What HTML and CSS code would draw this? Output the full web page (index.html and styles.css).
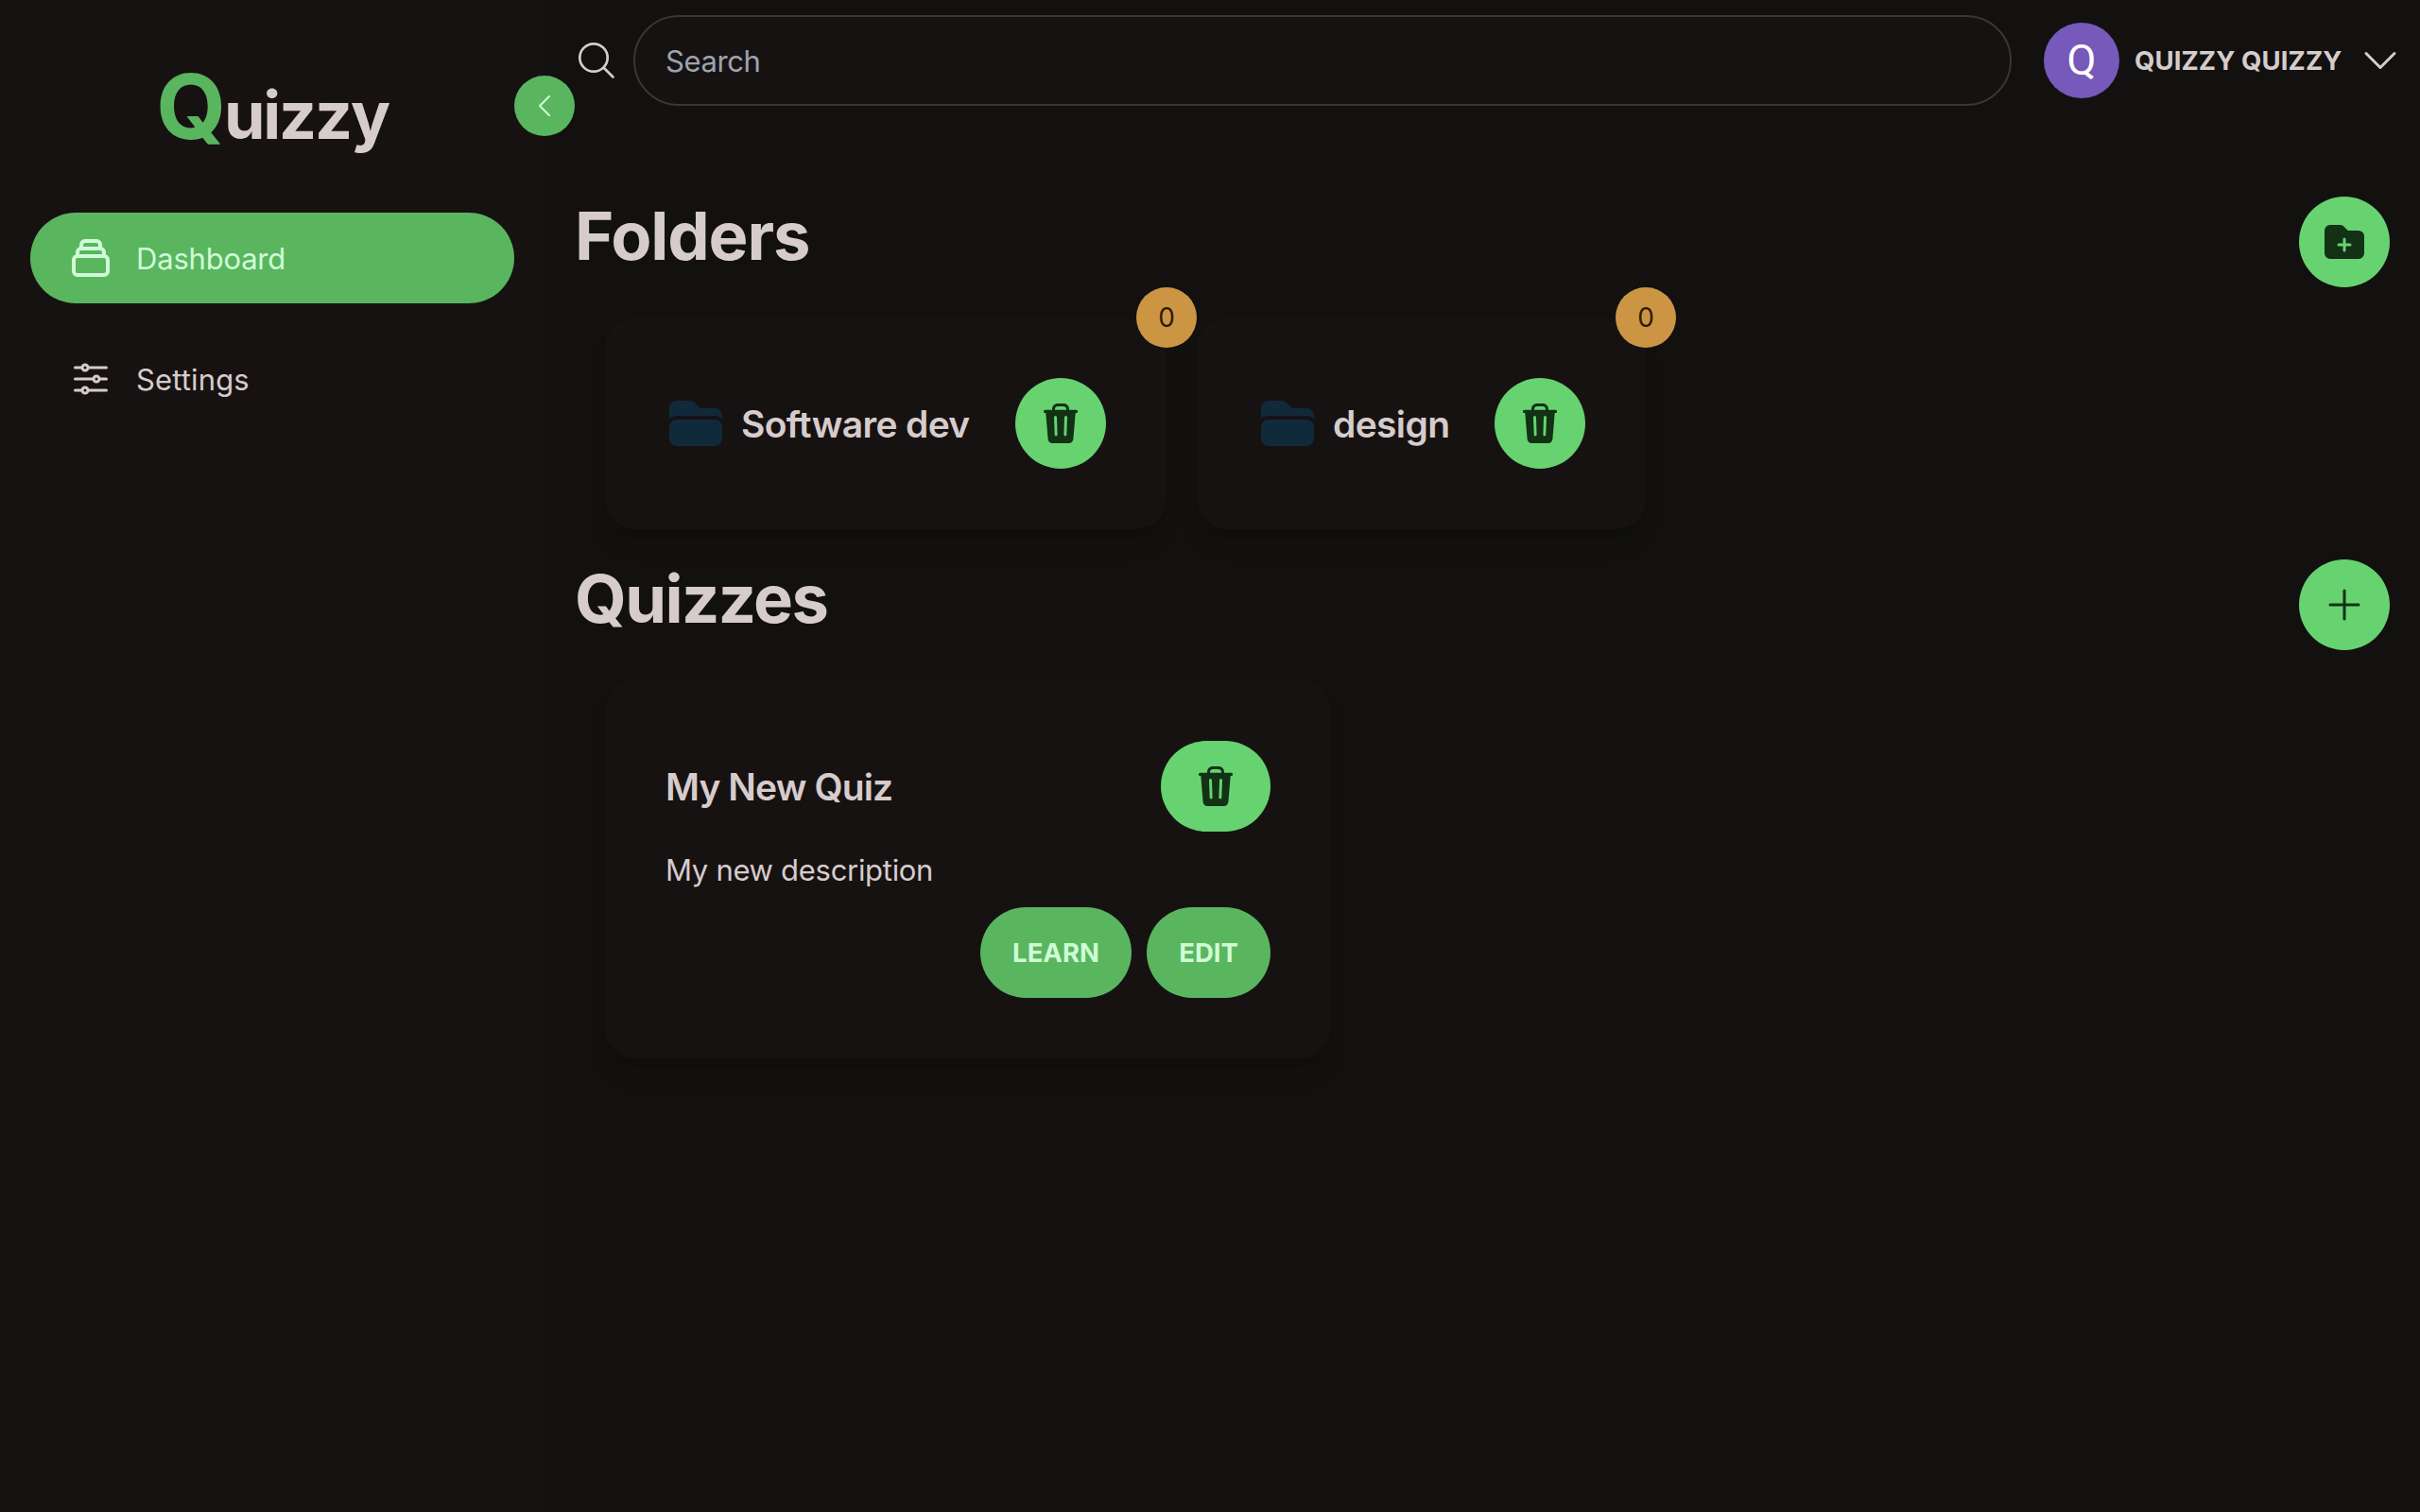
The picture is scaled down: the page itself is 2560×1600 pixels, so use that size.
FILE: index.html
```
<!DOCTYPE html>
<html lang="en">
<head>
<meta charset="utf-8">
<title>Quizzy</title>
<link rel="stylesheet" href="styles.css">
</head>
<body>
<svg class="sprite" aria-hidden="true">
  <symbol id="trash" viewBox="0 0 48 48"><path fill-rule="evenodd" d="M15 9.800V9C15 5.500 17.500 3 21 3H27C30.500 3 33 5.500 33 9V9.800H40.500A1.600 1.600 0 0 1 40.500 13H39.700L37.400 40.500C37.200 43.200 35.300 45 32.500 45H15.500C12.700 45 10.800 43.200 10.600 40.500L8.300 13H7.500A1.600 1.600 0 0 1 7.500 9.800ZM18 9.800H30V9C30 7 28.800 6 27 6H21C19.200 6 18 7 18 9ZM17 17.600L17.700 36A1.450 1.450 0 0 0 20.600 36L20 17.600A1.500 1.500 0 0 0 17 17.600ZM28 17.600L27.400 36A1.450 1.450 0 0 0 30.300 36L31 17.600A1.500 1.500 0 0 0 28 17.600Z"/></symbol>
  <symbol id="folder" viewBox="0 0 24 24"><path d="M19.500 21a3 3 0 0 0 3-3v-4.500a3 3 0 0 0-3-3h-15a3 3 0 0 0-3 3V18a3 3 0 0 0 3 3h15ZM1.500 10.146V6a3 3 0 0 1 3-3h5.379a2.250 2.250 0 0 1 1.590.659l2.122 2.121c.14.141.331.22.53.22H19.500a3 3 0 0 1 3 3v1.146A4.483 4.483 0 0 0 19.500 9h-15a4.483 4.483 0 0 0-3 1.146Z"/></symbol>
</svg>
<div class="app">
  <aside class="sidebar">
    <div class="logo"><span class="logo-q">Q</span><span class="logo-rest">uizzy</span></div>
    <button class="toggle" aria-label="Collapse"><svg viewBox="0 0 24 24" class="line"><path d="M15.750 19.500 8.250 12l7.500-7.500"/></svg></button>
    <nav class="nav">
      <a class="nav-item active"><svg viewBox="0 0 24 24" class="line"><path d="M19 11H5m14 0a2 2 0 0 1 2 2v6a2 2 0 0 1-2 2H5a2 2 0 0 1-2-2v-6a2 2 0 0 1 2-2m14 0V9a2 2 0 0 0-2-2M5 11V9a2 2 0 0 1 2-2m0 0V5a2 2 0 0 1 2-2h6a2 2 0 0 1 2 2v2M7 7h10"/></svg><span class="label t-dash">Dashboard</span></a>
      <a class="nav-item"><svg viewBox="0 0 24 24" class="line"><path d="M10.500 6h9.750M10.500 6a1.500 1.500 0 1 1-3 0m3 0a1.500 1.500 0 1 0-3 0M3.750 6H7.500m3 12h9.750m-9.750 0a1.500 1.500 0 0 1-3 0m3 0a1.500 1.500 0 0 0-3 0m-3.750 0H7.500m9-6h3.750m-3.750 0a1.500 1.500 0 0 1-3 0m3 0a1.500 1.500 0 0 0-3 0m-9.750 0h9.750"/></svg><span class="label t-set">Settings</span></a>
    </nav>
  </aside>
  <main class="main">
    <header class="topbar">
      <svg viewBox="0 0 48 48" class="line search-icon"><circle cx="20" cy="21" r="14.700"/><path d="M30.700 31.700 40.500 41.500"/></svg>
      <div class="search"><span class="label t-search">Search</span></div>
      <div class="user"><div class="avatar"><span>Q</span></div><span class="user-name">QUIZZY QUIZZY</span><svg viewBox="0 0 24 24" class="line chevron"><path d="m19.500 8.250-7.500 7.500-7.500-7.500"/></svg></div>
    </header>
    <section class="section">
      <div class="section-head"><h1 class="t-folders">Folders</h1>
        <button class="btn round" aria-label="Add folder"><svg viewBox="0 0 24 24"><path fill-rule="evenodd" d="M19.500 21a3 3 0 0 0 3-3V9a3 3 0 0 0-3-3h-5.379a.750.750 0 0 1-.530-.220L11.470 3.660A2.250 2.250 0 0 0 9.879 3H4.500a3 3 0 0 0-3 3v12a3 3 0 0 0 3 3h15Zm-6.750-10.500a.750.750 0 0 0-1.500 0v2.250H9a.750.750 0 0 0 0 1.500h2.250v2.250a.750.750 0 0 0 1.500 0v-2.250H15a.750.750 0 0 0 0-1.500h-2.250V10.500Z"/></svg></button></div>
      <div class="cards">
        <article class="card folder-card first"><span class="badge">0</span><svg class="folder-icon"><use href="#folder"/></svg><h2>Software dev</h2><button class="btn round" aria-label="Delete"><svg><use href="#trash"/></svg></button></article>
        <article class="card folder-card second"><span class="badge">0</span><svg class="folder-icon"><use href="#folder"/></svg><h2>design</h2><button class="btn round" aria-label="Delete"><svg><use href="#trash"/></svg></button></article>
      </div>
    </section>
    <section class="section">
      <div class="section-head"><h1 class="t-quizzes">Quizzes</h1>
        <button class="btn round" aria-label="Add quiz"><svg viewBox="0 0 24 24" class="line"><path d="M12 4.500v15m7.500-7.500h-15"/></svg></button></div>
      <div class="cards">
        <article class="card quiz-card">
          <div class="quiz-head"><h2 class="t-my">My New Quiz</h2><button class="btn wide" aria-label="Delete"><svg><use href="#trash"/></svg></button></div>
          <p>My new description</p>
          <div class="actions"><button class="btn primary learn">LEARN</button><button class="btn primary edit">EDIT</button></div>
        </article>
      </div>
    </section>
  </main>
</div>
</body>
</html>
```
FILE: styles.css
```
* { box-sizing: border-box; }
body { margin: 0; background: #12110f; color: #d6cccc; font: 400 31px/48px Inter, "Liberation Sans", sans-serif; }
h1, h2, p { margin: 0; }
button { font: inherit; border: 0; padding: 0; }
svg { display: block; width: 48px; height: 48px; flex: none; fill: currentColor; }
.sprite { position: absolute; width: 0; height: 0; }
.line { fill: none; stroke: currentColor; stroke-width: 1.5; stroke-linecap: round; stroke-linejoin: round; }
.label { padding-top: 2px; }
.app { display: flex; width: 2560px; height: 1600px; overflow: hidden; }

.sidebar { position: relative; width: 576px; flex: none; background: #171212; padding: 65px 32px 0; }
.logo { display: flex; justify-content: center; align-items: baseline; height: 96px; line-height: 96px; font-weight: 700; }
.logo-q { font-size: 95px; color: #5ab55f; letter-spacing: -2px; }
.logo-rest { font-size: 70px; letter-spacing: -2.2px; }
.toggle { position: absolute; left: 544px; top: 80px; z-index: 1; width: 64px; height: 64px; border-radius: 50%; background: #5ab55f; color: #cffcd6; display: grid; place-items: center; }
.toggle svg { width: 32px; height: 32px; }
.nav { display: grid; gap: 32px; margin-top: 64px; }
.nav-item { display: flex; align-items: center; gap: 24px; height: 96px; padding: 0 40px; border-radius: 48px; }
.active { background: #5ab55f; color: #cffcd6; }
.active svg { stroke-width: 2; }
.t-dash { letter-spacing: -.2px; }
.t-set { letter-spacing: .15px; }

.main { flex: 1; min-width: 0; }
.topbar { display: flex; align-items: center; height: 128px; padding: 0 16px 0 32px; }
.search-icon { stroke-width: 2.7; }
.search { width: 1458px; height: 96px; margin-left: 14px; border: 2px solid #3a3635; border-radius: 48px; background: #171212; color: #9ca3af; padding: 0 32px; display: flex; align-items: center; }
.t-search { letter-spacing: -.4px; }
.user { display: flex; align-items: center; margin-left: 34px; }
.avatar { width: 80px; height: 80px; border-radius: 50%; background: #7759bb; color: #fff; display: grid; place-items: center; font: 400 45px/1 Roboto, sans-serif; }
.avatar span { padding-bottom: 2px; }
.user-name { width: 220px; margin: 0 16px; font-size: 27.5px; font-weight: 650; letter-spacing: .1px; white-space: nowrap; }

.section { padding: 0 32px; }
.section-head { display: flex; justify-content: space-between; height: 128px; }
.section:nth-of-type(1) .section-head { margin-top: 80px; }
.section:nth-of-type(2) .section-head { margin-top: 32px; }
h1 { padding-top: 2px; font-size: 70.5px; line-height: 80px; font-weight: 700; }
.t-folders { letter-spacing: -1.15px; }
.t-quizzes { letter-spacing: -1.6px; }
h2 { padding-top: 2px; font-size: 39px; line-height: 56px; font-weight: 630; letter-spacing: -.65px; white-space: nowrap; }
.t-my { letter-spacing: -.9px; }
.btn { flex: none; height: 96px; border-radius: 48px; background: #66d370; color: #123115; display: grid; place-items: center; }
.round { width: 96px; }
.wide { width: 116px; }
.primary { background: #5ab55f; color: #cffcd6; font-size: 27.5px; font-weight: 650; }
.learn { width: 160px; }
.edit { width: 131px; }

.cards { display: flex; gap: 32px; padding-left: 32px; }
.card { position: relative; background: #171212; border-radius: 32px; padding: 64px; box-shadow: 0 20px 25px -5px rgba(0,0,0,.1), 0 8px 10px -6px rgba(0,0,0,.1); }
.folder-card { display: flex; align-items: center; height: 224px; }
.folder-card .btn { margin-left: auto; }
.first { width: 594px; }
.second { width: 475px; }
.folder-icon { width: 64px; height: 64px; margin-right: 16px; color: #102a3b; }
.badge { position: absolute; right: -32px; top: -32px; z-index: 1; width: 64px; height: 64px; border-radius: 50%; background: #cc9544; color: #2f1c04; display: grid; place-items: center; font-size: 28px; }
.quiz-card { width: 768px; height: 400px; }
.quiz-head { display: flex; justify-content: space-between; align-items: center; }
.quiz-card p { padding-top: 17px; height: 80px; line-height: 48px; letter-spacing: -.3px; }
.actions { display: flex; justify-content: flex-end; gap: 16px; }
```
